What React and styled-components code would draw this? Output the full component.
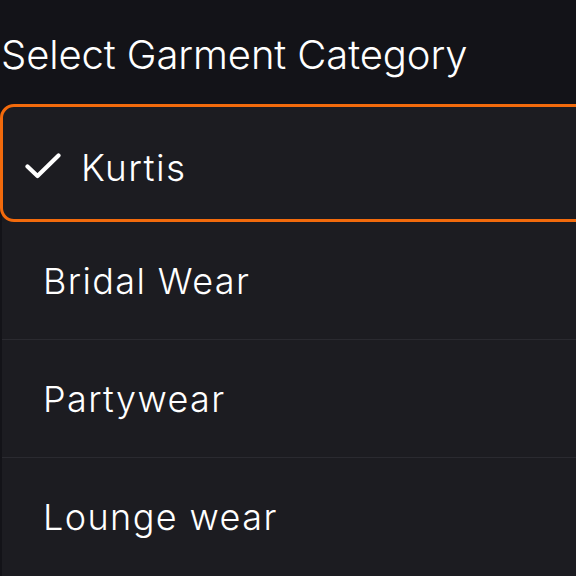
import React from "react";
import styled, { createGlobalStyle } from "styled-components";

const Global = createGlobalStyle`
  html, body { margin: 0; padding: 0; background: #131318; }
  body { width: 576px; height: 576px; overflow: hidden; font-family: Inter, "Noto Sans", sans-serif; }
`;

const Page = styled.div`
  width: 576px;
  height: 576px;
  overflow: hidden;
  background: #131318;
  display: flex;
  flex-direction: column;
`;

const Title = styled.h1`
  margin: 31px 0 0 1px;
  font-size: 40px;
  line-height: 48px;
  font-weight: 300;
  color: #ffffff;
  letter-spacing: -0.1px;
  white-space: nowrap;
`;

const List = styled.div`
  margin: 25px 0 0 2px;
  width: 640px;
  background: #1b1b20;
  border-radius: 20px;
  display: flex;
  flex-direction: column;
  flex-shrink: 0;
`;

const Row = styled.div`
  box-sizing: border-box;
  height: 118px;
  display: flex;
  align-items: center;
  gap: 20px;
  padding-left: ${(p) => (p.$selected ? "22px" : "41px")};
  padding-top: ${(p) => (p.$selected ? "8px" : "0")};
  margin-left: ${(p) => (p.$selected ? "-2px" : "0")};
  border: ${(p) => (p.$selected ? "3px solid #f26a0c" : "none")};
  border-radius: ${(p) => (p.$selected ? "14px" : "0")};
  border-bottom: ${(p) => (p.$selected ? "3px solid #f26a0c" : p.$last ? "none" : "1px solid #2a2a30")};
  background: #1c1c21;
  color: #ffffff;
  font-size: ${(p) => (p.$selected ? "37px" : "36px")};
  font-weight: 300;
  letter-spacing: 1.4px;
  white-space: nowrap;
`;

const CheckIcon = styled.svg`
  flex-shrink: 0;
  margin-top: -3px;
`;

const Check = () => (
  <CheckIcon width="36" height="26" viewBox="0 0 36 26" fill="none">
    <path d="M2.5 13.5 L12.5 23 L33.5 2.5" stroke="#fff" strokeWidth="4.2" strokeLinecap="round" strokeLinejoin="round" />
  </CheckIcon>
);

const items = ["Kurtis", "Bridal Wear", "Partywear", "Lounge wear"];

export default function App() {
  return (
    <Page>
      <Global />
      <Title>Select Garment Category</Title>
      <List>
        {items.map((it, i) => (
          <Row key={it} $selected={i === 0} $last={i === items.length - 1}>
            {i === 0 && <Check />}
            <span>{it}</span>
          </Row>
        ))}
      </List>
    </Page>
  );
}
